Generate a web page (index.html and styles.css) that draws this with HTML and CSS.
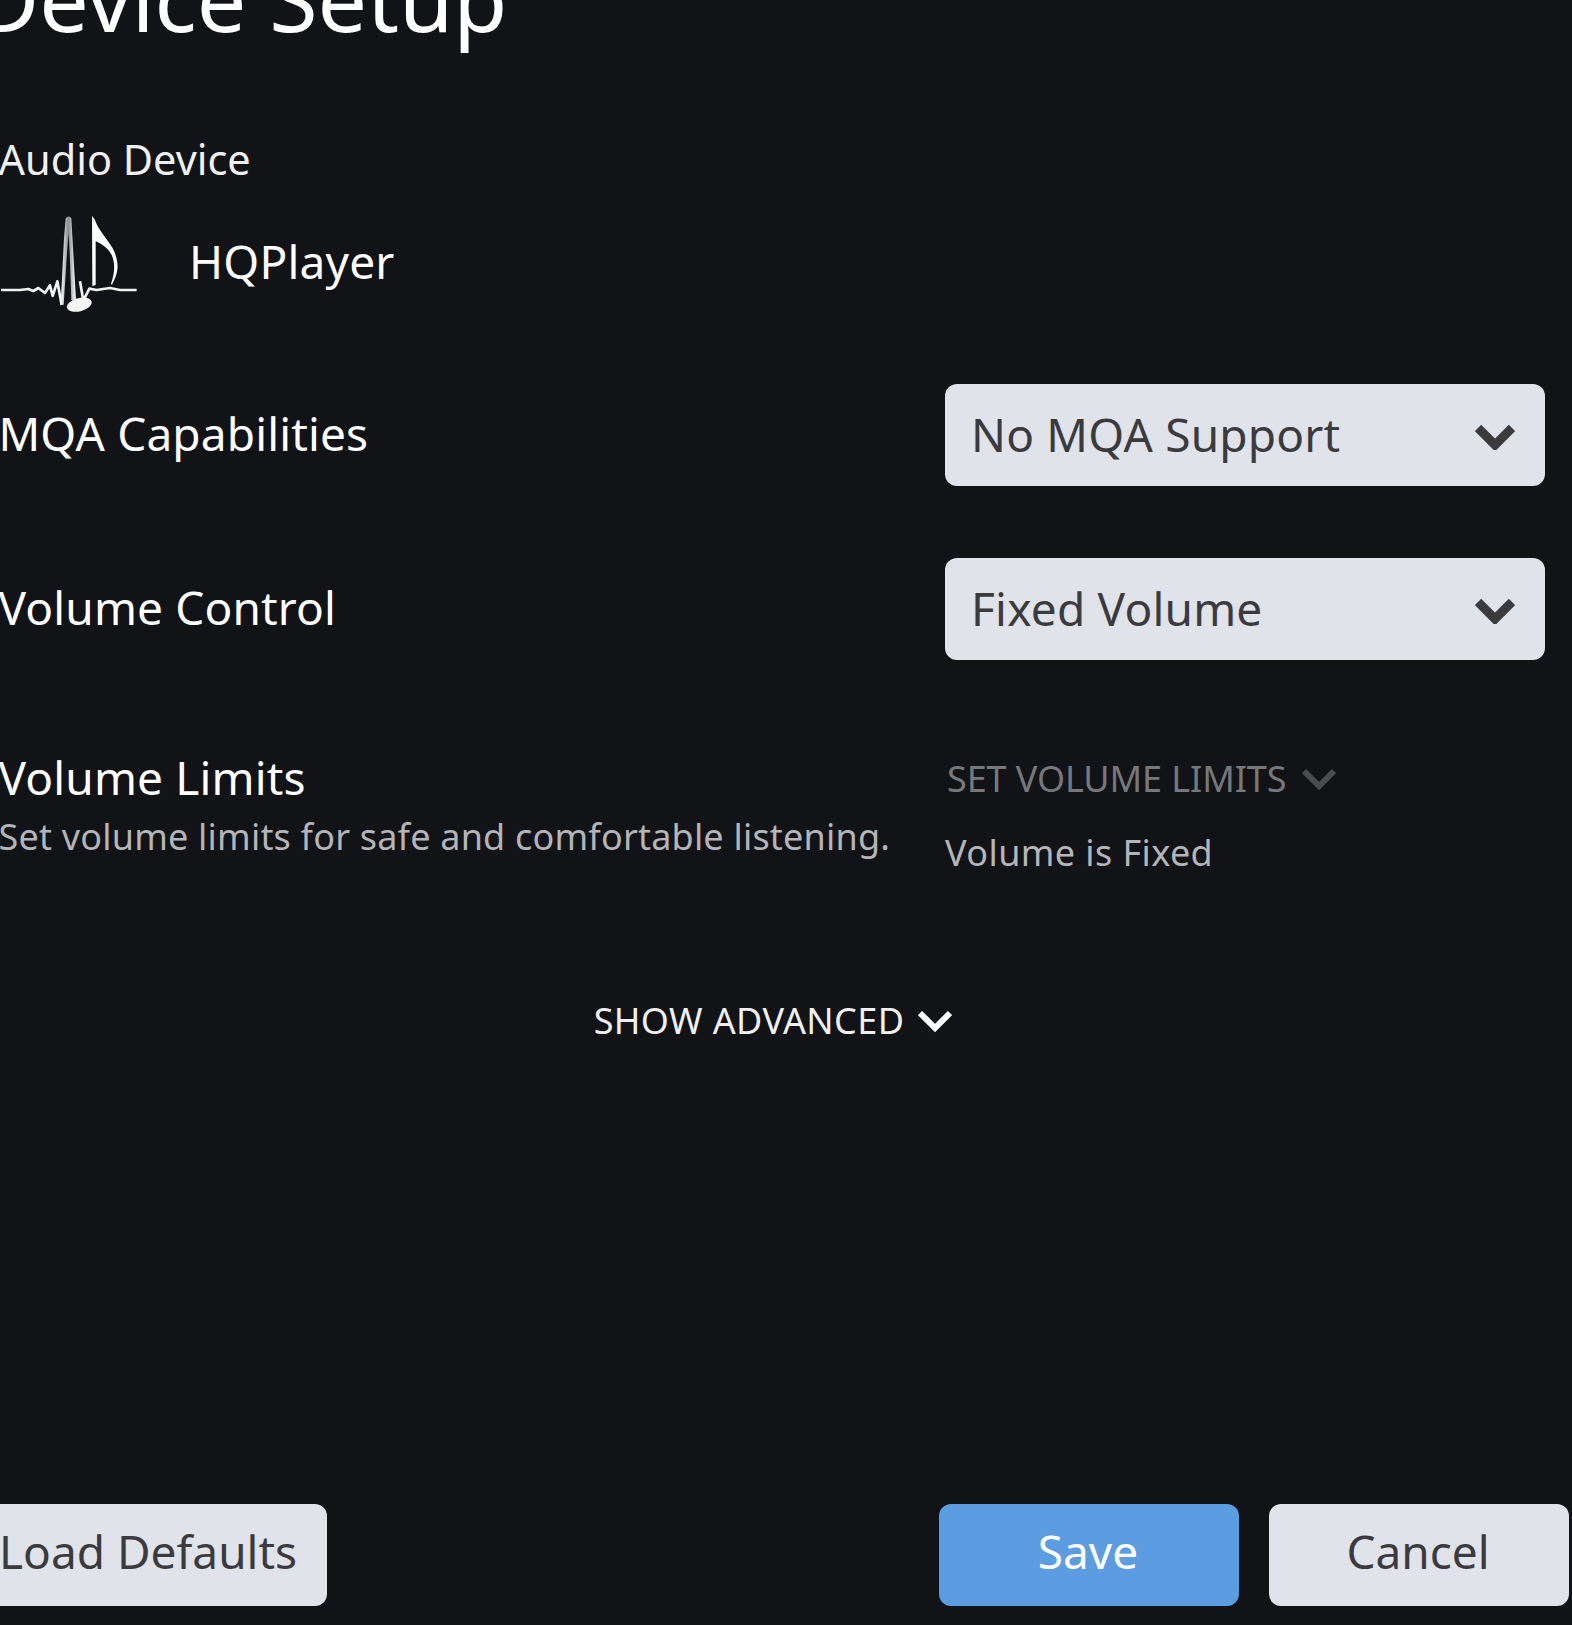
FILE: index.html
```html
<!DOCTYPE html>
<html lang="en">
<head>
<meta charset="utf-8">
<title>Device Setup</title>
<link rel="stylesheet" href="styles.css">
</head>
<body>
<main class="page">
  <h1 class="title">Device Setup</h1>
  <section class="device">
    <div class="device-label">Audio Device</div>
    <div class="device-info">
      <svg class="device-logo" viewBox="0 0 450 330" aria-hidden="true">
        <defs>
          <linearGradient id="spike" x1="0" x2="1" y1="0" y2="0">
            <stop offset="0" stop-color="#fff"/>
            <stop offset="0.5" stop-color="#8a8b8d"/>
            <stop offset="1" stop-color="#fff"/>
          </linearGradient>
        </defs>
        <path class="logo-line" d="M3 240 L60 240 L85 237 L100 243 L115 234 L135 249 L150 226 L158 258 L172 214 L185 285"/>
        <path class="logo-line" d="M240 214 L250 272 L268 236 L290 240 L330 234 L360 240 L410 240"/>
        <path fill="url(#spike)" d="M182 284 L192 85 L197 25 Q206 14 214 25 L220 130 L228 270 L214 270 L209 130 L206 70 L201 130 L191 284 Z"/>
        <path fill="#fff" d="M276 18 L284 28 C295 60 320 85 338 115 C352 140 356 170 350 190 C346 205 340 215 336 224 L333 222 C342 195 348 165 335 135 C322 110 300 100 287 93 L287 225 L277 228 Z"/>
        <ellipse class="logo-head" cx="238" cy="284" rx="38" ry="20" transform="rotate(-14 238 284)"/>
      </svg>
      <span class="device-name">HQPlayer</span>
    </div>
  </section>

  <section class="rows">
    <div class="row">
      <div class="row-label row-label-centered">MQA Capabilities</div>
      <div class="select"><span>No MQA Support</span>
        <svg class="chevron" viewBox="0 0 40 32" aria-hidden="true"><path d="M3 10 L20 27 L37 10"/></svg>
      </div>
    </div>
    <div class="row">
      <div class="row-label row-label-centered">Volume Control</div>
      <div class="select"><span>Fixed Volume</span>
        <svg class="chevron" viewBox="0 0 40 32" aria-hidden="true"><path d="M3 10 L20 27 L37 10"/></svg>
      </div>
    </div>
    <div class="row row-top">
      <div>
        <div class="row-label">Volume Limits</div>
        <div class="row-sub">Set volume limits for safe and comfortable listening.</div>
      </div>
      <div class="limits">
        <div class="limits-toggle">SET VOLUME LIMITS
          <svg class="chevron-small" viewBox="0 0 34 26" aria-hidden="true"><path d="M2 5 L17 20 L32 5"/></svg>
        </div>
        <div class="limits-note">Volume is Fixed</div>
      </div>
    </div>
  </section>

  <div class="advanced">SHOW ADVANCED
    <svg class="chevron-adv" viewBox="0 0 34 26" aria-hidden="true"><path d="M2 5 L17 20 L32 5"/></svg>
  </div>

  <footer class="footer">
    <button class="btn btn-defaults">Load Defaults</button>
    <div class="footer-actions">
      <button class="btn btn-primary">Save</button>
      <button class="btn">Cancel</button>
    </div>
  </footer>
</main>
</body>
</html>
```
FILE: styles.css
```css
* { box-sizing: border-box; }
html, body { margin: 0; height: 100%; }
body {
  background: #111317;
  color: #fff;
  font-family: "Noto Sans", sans-serif;
  overflow: hidden;
}
.page {
  width: 1572px;
  height: 1625px;
  display: flex;
  flex-direction: column;
  overflow: hidden;
}
.title {
  margin: -52px 0 0 -25px;
  font-size: 88px;
  line-height: 100px;
  font-weight: 400;
  height: 100px;
  white-space: nowrap;
}
.device { margin-top: 81px; }
.device-label { font-size: 41.5px; line-height: 60px; color: #f0f0f0; margin-left: -1.5px; }
.device-info { display: flex; align-items: center; height: 110px; margin-top: 16px; }
.device-logo { width: 150px; height: 110px; flex: none; margin-top: 10px; }
.logo-line { fill: none; stroke: #f2f2f2; stroke-width: 8; stroke-linejoin: round; }
.logo-head { fill: #f4f4f4; }
.device-name { font-size: 46px; letter-spacing: 0.2px; margin: 2px 0 0 39px; }
.rows { margin-top: 69px; display: flex; flex-direction: column; gap: 72px; }
.row { display: grid; grid-template-columns: 945px 600px; align-items: center; }
.row-top { align-items: start; margin-top: 13px; }
.row-label { font-size: 46px; line-height: 64px; letter-spacing: 0.15px; margin-left: -1.5px; }
.row-label-centered { padding-bottom: 4px; }
.row-sub { font-size: 36px; line-height: 50px; letter-spacing: 0.2px; color: #b4b5b8; margin: 3px 0 0 -1.5px; }
.select {
  height: 102px;
  border-radius: 12px;
  background: #e0e3ea;
  color: #3b3b3e;
  font-size: 46px;
  letter-spacing: 0.2px;
  padding: 0 30px 2px 26px;
  display: flex;
  align-items: center;
  justify-content: space-between;
}
.chevron { width: 40px; height: 32px; }
.chevron path { fill: none; stroke: #3b3b3e; stroke-width: 9; }
.limits { padding-top: 2px; }
.limits-toggle {
  font-size: 36px;
  line-height: 64px;
  letter-spacing: -0.1px;
  color: #77787b;
  display: flex;
  align-items: center;
  gap: 16px;
  padding-left: 2px;
}
.chevron-small { width: 34px; height: 26px; }
.chevron-small path { fill: none; stroke: #4a4b4e; stroke-width: 6; }
.limits-note { font-size: 36px; line-height: 50px; letter-spacing: 0.4px; margin-top: 17px; color: #b4b5b8; }
.advanced {
  margin-top: 118px;
  font-size: 36px;
  line-height: 50px;
  letter-spacing: 0.4px;
  display: flex;
  justify-content: center;
  align-items: center;
  gap: 14px;
  color: #f0f0f0;
  padding-right: 26px;
}
.chevron-adv { width: 34px; height: 26px; }
.chevron-adv path { fill: none; stroke: #fff; stroke-width: 6; }
.footer {
  margin-top: auto;
  margin-bottom: 19px;
  display: flex;
  justify-content: space-between;
  padding-right: 3px;
}
.footer-actions { display: flex; gap: 30px; }
.btn {
  height: 102px;
  width: 300px;
  border: 0;
  border-radius: 12px;
  background: #e0e3ea;
  color: #3b3b3e;
  font-family: inherit;
  font-size: 46px;
  padding: 0 2px 8px 0;
}
.btn-defaults { width: auto; padding: 0 30px 8px; margin-left: -31px; }
.btn-primary { background: #5c9ce0; color: #fff; }
```
